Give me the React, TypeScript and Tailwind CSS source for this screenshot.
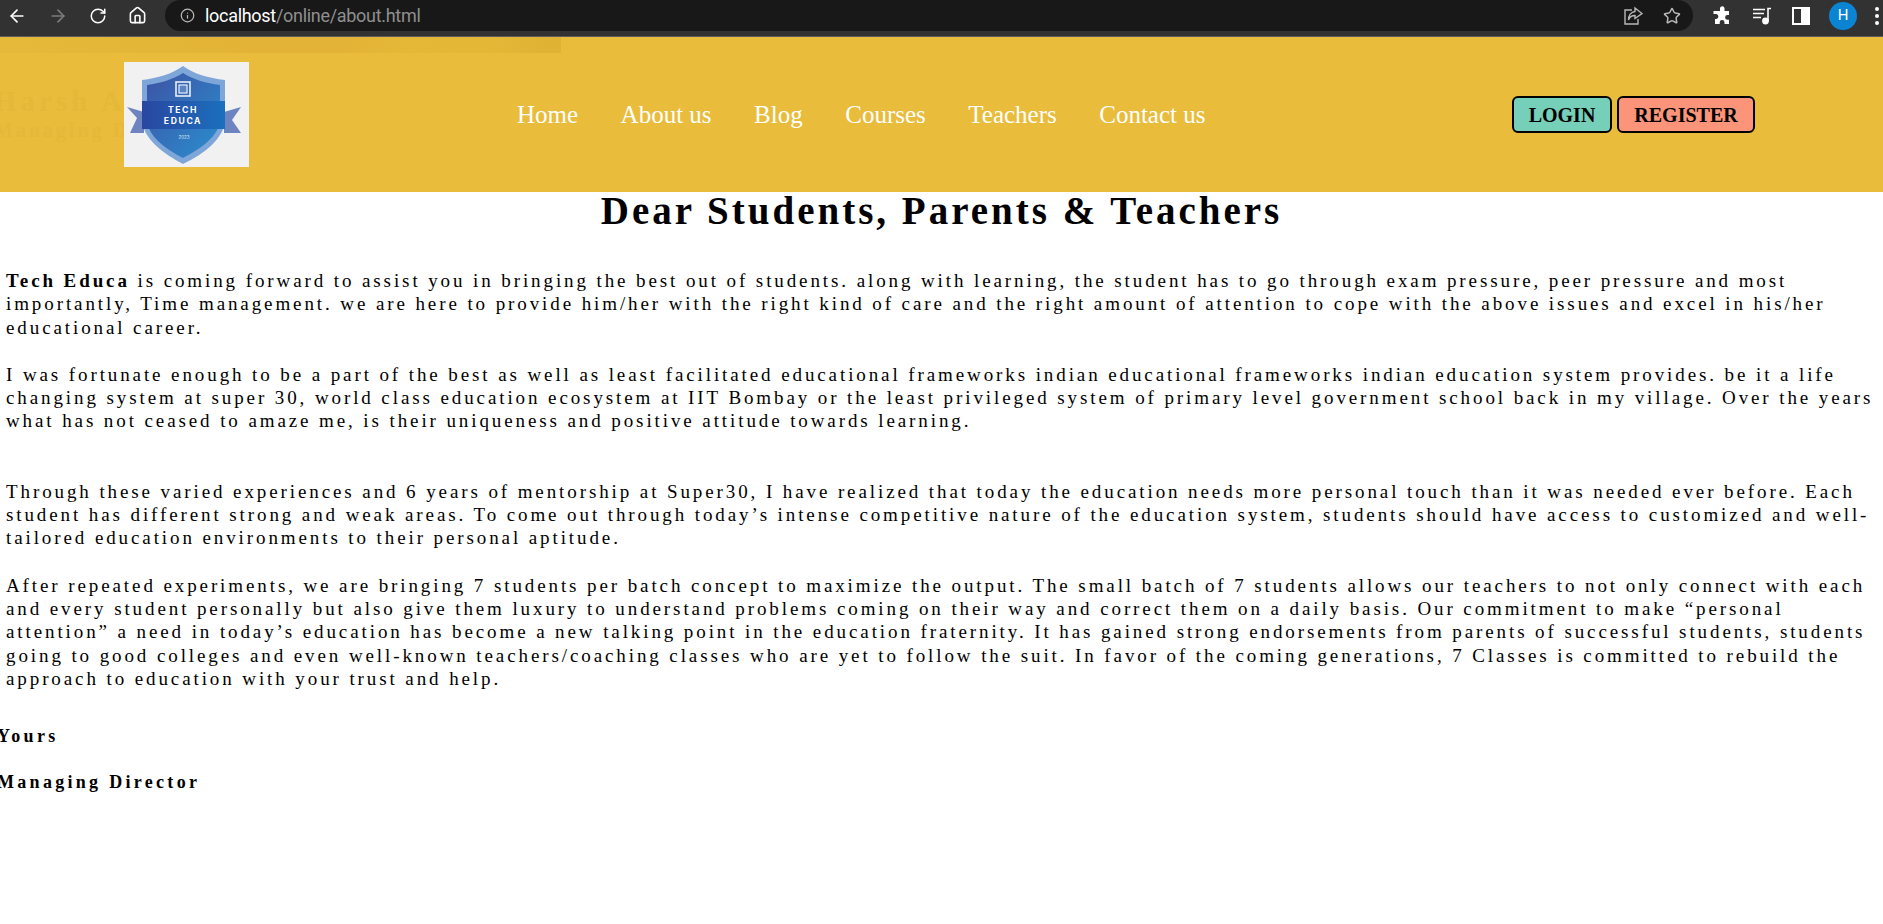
import { ArrowLeft, ArrowRight, RotateCw, Home, Info, Star } from 'lucide-react';

const navLinks = ['Home', 'About us', 'Blog', 'Courses', 'Teachers', 'Contact us'];

const Logo = () => (
    <div className="w-[125px] h-[105px] bg-[#f1f1f2] shrink-0 relative z-10">
        <svg viewBox="0 0 125 105" className="w-full h-full">
            <defs>
                <linearGradient id="shield" x1="0" y1="0" x2="1" y2="1">
                    <stop offset="0" stopColor="#3d53a4" />
                    <stop offset="1" stopColor="#2a8fd0" />
                </linearGradient>
                <linearGradient id="band" x1="0" y1="0" x2="1" y2="0">
                    <stop offset="0" stopColor="#2a46a0" />
                    <stop offset="1" stopColor="#1b70bd" />
                </linearGradient>
            </defs>
            <path d="M3 45 L20 50 L20 71 L6 71 L13 56 Z" fill="#6d84c0" />
            <path d="M117 45 L100 50 L100 71 L117 71 L108 58 Z" fill="#6d84c0" />
            <path d="M59 4 C 70 12 84 16 101 18 L101 57 C 101 76 80 92 59 102 C 40 92 18 76 18 57 L18 18 C 34 16 48 12 59 4 Z" fill="#7fa6d8" />
            <path d="M59 11 C 70 18 82 21 96 23 L96 57 C 96 74 76 87 59 96 C 42 87 23 74 23 57 L23 23 C 36 21 48 18 59 11 Z" fill="url(#shield)" />
            <rect x="18" y="39" width="83" height="28" fill="url(#band)" />
            <rect x="52" y="20" width="14" height="14" fill="none" stroke="#e8eef8" strokeWidth="1.6" />
            <rect x="55" y="23" width="8" height="8" fill="#5a83c4" stroke="#e8eef8" strokeWidth="1.2" />
            <text x="59" y="50.6" textAnchor="middle" fill="#fff" fontSize="8.6" fontWeight="700" letterSpacing="1.6" fontFamily="Inter, sans-serif">TECH</text>
            <text x="59" y="62" textAnchor="middle" fill="#fff" fontSize="8.6" fontWeight="700" letterSpacing="1.6" fontFamily="Inter, sans-serif">EDUCA</text>
            <text x="60" y="77" textAnchor="middle" fill="#dce8f6" fontSize="4.5" fontFamily="Inter, sans-serif">2023</text>
        </svg>
    </div>
);

const BrowserBar = () => (
    <div className="h-[37px] bg-[#323232] border-b border-[#5b5b5b] flex items-start relative font-['Roboto',sans-serif]">
        <div className="flex items-center h-[31px] w-[165px] shrink-0 pl-[7px] gap-[21px] text-white">
            <ArrowLeft size={20} strokeWidth={2} />
            <ArrowRight size={20} strokeWidth={2} className="text-[#7c7c7c]" />
            <RotateCw size={18} strokeWidth={2} />
            <Home size={19} strokeWidth={2} />
        </div>
        <div className="h-[31px] w-[1528px] bg-[#181818] rounded-[16px] flex items-center pl-[15px] pr-[12px]">
            <Info size={15} className="text-[#b9b9b9]" />
            <span className="ml-[10px] text-[18px] tracking-[-0.3px]">
                <span className="text-white">localhost</span>
                <span className="text-[#8f8f8f]">/online/about.html</span>
            </span>
            <div className="ml-auto flex items-center gap-[20px] text-[#b8b8b8]">
                <svg width="20" height="20" viewBox="0 0 20 20" fill="none" stroke="currentColor" strokeWidth="1.4">
                    <path d="M9 4 H2 V18 H15 V13" />
                    <path d="M12 2 L19 7.5 L12 12.5 V9.5 C9 9.5 6.5 11 5.5 14 C5.5 9.5 8 6 12 5.5 Z" />
                </svg>
                <Star size={18} strokeWidth={2} />
            </div>
        </div>
        <div className="flex items-center h-[31px] text-white ml-[19px] gap-[20px]">
            <svg width="20" height="20" viewBox="0 0 20 20" fill="currentColor">
                <path d="M8 2 a2.3 2.3 0 0 1 4.5 0 V5 H17 V9 H15.5 a2.4 2.4 0 0 0 0 4.8 H17 V18 H12.5 V16.5 a2.4 2.4 0 0 0 -4.8 0 V18 H3 V13 H4.5 a2.6 2.6 0 0 0 0 -5 H1.5 V5 H8 Z" />
            </svg>
            <svg width="20" height="20" viewBox="0 0 20 20" fill="none" stroke="currentColor" strokeWidth="1.6">
                <path d="M1 3.5 H13 M1 7.5 H12 M1 11.5 H9" />
                <path d="M16 15 V2.5 H19" />
                <circle cx="13.5" cy="15" r="2.6" fill="currentColor" />
            </svg>
            <div className="w-[18px] h-[18px] border-[2px] border-white flex justify-end">
                <div className="w-[7px] bg-white" />
            </div>
            <div className="w-[28px] h-[28px] rounded-full bg-[#0b84d3] flex items-center justify-center text-[15px] -ml-[1px]">H</div>
            <div className="flex flex-col gap-[3px] -ml-[2px]">
                <div className="w-[4px] h-[4px] bg-white rounded-full" />
                <div className="w-[4px] h-[4px] bg-white rounded-full" />
                <div className="w-[4px] h-[4px] bg-white rounded-full" />
            </div>
        </div>
    </div>
);

const App = () => {
    return (
        <div className="min-h-[924px] bg-white text-black font-['Liberation_Serif',serif] overflow-hidden">
            <BrowserBar />

            <header className="h-[155px] bg-[#e9bc3c] flex items-center relative">
                {/* faded banner sitting under the nav */}
                <div className="absolute left-0 top-0 w-[561px] h-[16px] bg-[linear-gradient(90deg,#e7b93a_0%,#e4b637_25%,#e2b336_45%,#e2b336_62%,#e6b838_72%,#e5b737_88%,#dfb134_100%)]" />
                <div className="absolute left-[-6px] top-[46px] text-[#e5b83a] font-bold">
                    <div className="text-[29px] tracking-[4px] leading-[36px] whitespace-nowrap">Harsh Awasthi</div>
                    <div className="text-[20px] tracking-[3px] leading-[22px] whitespace-nowrap">Managing Director</div>
                </div>

                <div className="ml-[124px] relative">
                    <Logo />
                </div>
                <nav className="flex gap-[42.5px] ml-[268px] text-white text-[25px] relative">
                    {navLinks.map((link) => (
                        <a key={link}>{link}</a>
                    ))}
                </nav>
                <div className="ml-auto mr-[128px] flex gap-[5px] relative">
                    <button className="h-[37px] w-[100px] rounded-[6px] border-[2px] border-black bg-[#76cfb8] font-bold text-[20px]">LOGIN</button>
                    <button className="h-[37px] w-[138px] rounded-[6px] border-[2px] border-black bg-[#fb9478] font-bold text-[20px]">REGISTER</button>
                </div>
            </header>

            <h1 className="text-[39px] font-bold tracking-[3px] text-center leading-[42px] mt-[-2px]">Dear Students, Parents &amp; Teachers</h1>

            <main className="px-[6px] text-[19px] leading-[23.3px] tracking-[2.9px] mt-[37px]">
                <p>
                    <b>Tech Educa</b> is coming forward to assist you in bringing the best out of students. along with learning, the student has to go through exam pressure, peer pressure and most importantly, Time management. we are here to provide him/her with the right kind of care and the right amount of attention to cope with the above issues and excel in his/her educational career.
                </p>
                <p className="mt-[24px]">
                    I was fortunate enough to be a part of the best as well as least facilitated educational frameworks indian educational frameworks indian education system provides. be it a life changing system at super 30, world class education ecosystem at IIT Bombay or the least privileged system of primary level government school back in my village. Over the years what has not ceased to amaze me, is their uniqueness and positive attitude towards learning.
                </p>
                <p className="mt-[47px]">
                    Through these varied experiences and 6 years of mentorship at Super30, I have realized that today the education needs more personal touch than it was needed ever before. Each student has different strong and weak areas. To come out through today’s intense competitive nature of the education system, students should have access to customized and well-tailored education environments to their personal aptitude.
                </p>
                <p className="mt-[24px]">
                    After repeated experiments, we are bringing 7 students per batch concept to maximize the output. The small batch of 7 students allows our teachers to not only connect with each and every student personally but also give them luxury to understand problems coming on their way and correct them on a daily basis. Our commitment to make “personal attention” a need in today’s education has become a new talking point in the education fraternity. It has gained strong endorsements from parents of successful students, students going to good colleges and even well-known teachers/coaching classes who are yet to follow the suit. In favor of the coming generations, 7 Classes is committed to rebuild the approach to education with your trust and help.
                </p>
                <div className="-ml-[9px] mt-[35px] font-bold text-[18px] tracking-[3.3px]">
                    <p>Yours</p>
                    <p className="mt-[23px]">Managing Director</p>
                </div>
            </main>
        </div>
    );
};

export default App;
